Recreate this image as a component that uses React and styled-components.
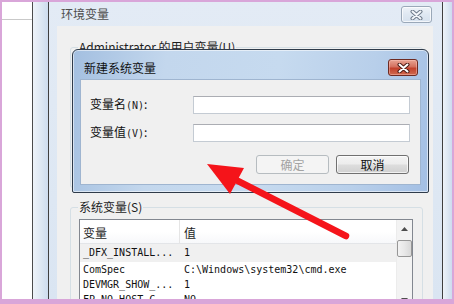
import React from 'react';
import styled, { createGlobalStyle } from 'styled-components';

const Global = createGlobalStyle`
  html, body { margin: 0; padding: 0; background: #d9a6d9; }
  body { width: 454px; height: 304px; overflow: hidden; font-family: "Noto Sans CJK SC", "Liberation Sans", sans-serif; }
  * { box-sizing: border-box; }
`;

const Screen = styled.div`
  position: relative;
  width: 454px;
  height: 304px;
  padding: 2px 2px 5px 2px;
  background: #d9a6d9;
  display: flex;
  overflow: hidden;
`;

const BackWindow = styled.div`
  width: 31px;
  background: #fff;
  border-right: 1px solid #4b4b4b;
`;

const BackWindowHeader = styled.div`
  height: 18px;
  border-bottom: 1px solid #c9c9c9;
`;

const GlassBand = styled.div`
  width: ${p => p.$w}px;
  background: linear-gradient(90deg, #eef3f9 0%, #dbe6f2 60%, #cddcee 100%);
  border-${p => p.$side}: 1px solid #3f3f3f;
`;

const Dialog = styled.div`
  flex: 1;
  display: flex;
  flex-direction: column;
  background: linear-gradient(180deg, #e3ebf5 0%, #dae5f2 100%);
  overflow: hidden;
`;

const TitleBar = styled.div`
  height: 24px;
  display: flex;
  align-items: flex-start;
  justify-content: space-between;
  padding: 4px 10px 0 12px;
  flex-shrink: 0;
`;

const DialogTitle = styled.div`
  font-size: 12px;
  line-height: 16px;
  color: #4d4d4d;
`;

const CloseButton = styled.div`
  width: ${p => p.$w}px;
  height: 17px;
  border-radius: 3px;
  display: flex;
  align-items: center;
  justify-content: center;
  border: 1px solid ${p => (p.$active ? '#6d2a22' : '#9aa8b8')};
  background: ${p =>
    p.$active
      ? 'linear-gradient(180deg, #e8a493 0%, #d4705e 45%, #c2412c 55%, #cf6a4f 100%)'
      : 'linear-gradient(180deg, #eef3f8 0%, #dfe8f2 50%, #d6e1ee 100%)'};
  box-shadow: inset 0 0 0 1px ${p => (p.$active ? 'rgba(255,200,190,0.45)' : 'rgba(255,255,255,0.7)')};
`;

const Body = styled.div`
  flex: 1;
  margin: 0 9px 0 8px;
  background: #f0f0f0;
  display: flex;
  flex-direction: column;
  overflow: hidden;
`;

const Group = styled.fieldset`
  margin: ${p => p.$mt}px 10px 0 13px;
  padding: 0 9px 0 7px;
  border: 1px solid #d5dfe5;
  border-radius: 3px;
  min-width: 0;
  height: ${p => (p.$h ? `${p.$h}px` : 'auto')};
  flex-shrink: 0;
`;

const GroupLabel = styled.legend`
  padding: 0 1px;
  font-size: 12px;
  line-height: 14px;
  color: #1e1e1e;
`;

const List = styled.div`
  margin-top: 5px;
  margin-left: 1px;
  height: 90px;
  border: 1px solid #828790;
  background: #fff;
  display: flex;
`;

const ListMain = styled.div`
  flex: 1;
  display: flex;
  flex-direction: column;
`;

const Columns = styled.div`
  display: grid;
  grid-template-columns: 100px 1fr;
`;

const HeaderRow = styled(Columns)`
  height: 24px;
  border-bottom: 1px solid #e3e5e8;
  background: linear-gradient(180deg, #ffffff 0%, #ffffff 50%, #f7f8fa 100%);
`;

const HeaderCell = styled.div`
  font-size: 12px;
  line-height: 16px;
  padding: 5px 0 0 ${p => p.$pl}px;
  color: #1e1e1e;
  border-right: ${p => (p.$divider ? '1px solid #e5e5e5' : 'none')};
`;

const Row = styled(Columns)`
  height: ${p => p.$h}px;
  align-items: center;
  background: ${p => (p.$selected ? '#f0f0f0' : 'transparent')};
`;

const Cell = styled.div`
  font-family: "DejaVu Sans Mono", "Liberation Mono", monospace;
  font-size: 10px;
  line-height: 14px;
  color: #111;
  padding-left: ${p => p.$pl}px;
  white-space: pre;
`;

const ScrollBar = styled.div`
  width: 16px;
  background: #f3f3f3;
  border-left: 1px solid #ececec;
  display: flex;
  flex-direction: column;
  align-items: center;
`;

const ScrollArrow = styled.div`
  height: 17px;
  width: 100%;
  display: flex;
  align-items: center;
  justify-content: center;
`;

const ScrollThumb = styled.div`
  width: 15px;
  height: 17px;
  margin-top: 3px;
  border: 1px solid #979797;
  border-radius: 2px;
  background: linear-gradient(90deg, #f3f3f3 0%, #e8e8e8 50%, #d9d9d9 100%);
`;

const ScrollTrack = styled.div`
  flex: 1;
`;

const Modal = styled.div`
  position: absolute;
  left: 72px;
  top: 49px;
  width: 357px;
  height: 144px;
  border: 1px solid #2f3b4a;
  border-radius: 6px 6px 2px 2px;
  background: linear-gradient(100deg, #a3bfe0 0%, #c3d7ed 25%, #c6daef 55%, #b8cfea 80%, #a3bfe4 100%);
  box-shadow: inset 0 0 0 1px rgba(255, 255, 255, 0.55);
  display: flex;
  flex-direction: column;
`;

const ModalTitleBar = styled.div`
  height: 29px;
  flex-shrink: 0;
  display: flex;
  align-items: flex-start;
  justify-content: space-between;
  padding: 9px 10px 0 11px;
`;

const ModalTitle = styled.div`
  font-size: 12px;
  line-height: 16px;
  color: #111;
  margin-top: 1px;
`;

const ModalBody = styled.div`
  flex: 1;
  margin: 0 7px 7px 7px;
  background: #f0f0f0;
  border: 1px solid #9fb5d0;
  padding: 16px 10px 0 9px;
`;

const Form = styled.div`
  display: grid;
  grid-template-columns: 103px 217px;
  row-gap: 10px;
  align-items: center;
`;

const Label = styled.div`
  font-size: 12px;
  line-height: 16px;
  color: #111;
`;

const Key = styled.span`
  font-size: 10px;
  font-family: "DejaVu Sans Mono", monospace;
  color: #222;
`;

const Input = styled.div`
  height: 18px;
  background: #fff;
  border: 1px solid #c4cbd3;
  border-top-color: #abadb3;
`;

const ButtonRow = styled.div`
  display: flex;
  justify-content: flex-end;
  gap: 7px;
  margin-top: 13px;
  margin-right: 1px;
`;

const Button = styled.div`
  width: 73px;
  height: 19px;
  border-radius: 3px;
  display: flex;
  align-items: center;
  justify-content: center;
  font-size: 12px;
  line-height: 16px;
  border: 1px solid ${p => (p.$disabled ? '#b6bcc0' : '#707070')};
  color: ${p => (p.$disabled ? '#a3a3a3' : '#111')};
  background: ${p =>
    p.$disabled
      ? '#f4f4f4'
      : 'linear-gradient(180deg, #f4f4f4 0%, #ececec 48%, #dddddd 52%, #d0d0d0 100%)'};
  box-shadow: inset 0 0 0 1px ${p => (p.$disabled ? 'transparent' : 'rgba(255,255,255,0.7)')};
`;

const Overlay = styled.svg`
  position: absolute;
  left: 0;
  top: 0;
  pointer-events: none;
`;

const CloseGlyph = ({ light }) => (
  <svg width="13" height="10" viewBox="0 0 13 10">
    <path d="M2.5 1.5 L10.5 8.5 M10.5 1.5 L2.5 8.5" stroke={light ? '#6d7a8a' : '#4a1a14'} strokeWidth="4" strokeLinecap="round" fill="none" />
    <path d="M2.5 1.5 L10.5 8.5 M10.5 1.5 L2.5 8.5" stroke={light ? '#f4f7fb' : '#ffffff'} strokeWidth="2" strokeLinecap="round" fill="none" />
  </svg>
);

const Tri = ({ up }) => (
  <svg width="7" height="4" viewBox="0 0 7 4">
    <path d={up ? 'M0 4 L3.5 0 L7 4 Z' : 'M0 0 L3.5 4 L7 0 Z'} fill="#4d4d4d" />
  </svg>
);

const rows = [
  ['_DFX_INSTALL...', '1', true],
  ['ComSpec', 'C:\\Windows\\system32\\cmd.exe', false],
  ['DEVMGR_SHOW_...', '1', false],
  ['FP_NO_HOST_C...', 'NO', false],
];

export default function App() {
  return (
    <>
      <Global />
      <Screen>
        <BackWindow>
          <BackWindowHeader />
        </BackWindow>
        <GlassBand $w={16} $side="right" />
        <Dialog>
          <TitleBar>
            <DialogTitle>环境变量</DialogTitle>
            <CloseButton $w={31}>
              <CloseGlyph light />
            </CloseButton>
          </TitleBar>
          <Body>
            <Group $mt={14} $h={148}>
              <GroupLabel>Administrator 的用户变量(U)</GroupLabel>
            </Group>
            <Group $mt={12}>
              <GroupLabel>系统变量(S)</GroupLabel>
              <List>
                <ListMain>
                  <HeaderRow>
                    <HeaderCell $pl={3} $divider>变量</HeaderCell>
                    <HeaderCell $pl={4}>值</HeaderCell>
                  </HeaderRow>
                  {rows.map(([k, v, sel], i) => (
                    <Row key={k} $selected={sel} $h={i === 0 ? 18 : 15}>
                      <Cell $pl={3}>{k}</Cell>
                      <Cell $pl={4}>{v}</Cell>
                    </Row>
                  ))}
                </ListMain>
                <ScrollBar>
                  <ScrollArrow><Tri up /></ScrollArrow>
                  <ScrollThumb />
                  <ScrollTrack />
                  <ScrollArrow><Tri /></ScrollArrow>
                </ScrollBar>
              </List>
            </Group>
          </Body>
        </Dialog>
        <GlassBand $w={10} $side="left" />

        <Modal>
          <ModalTitleBar>
            <ModalTitle>新建系统变量</ModalTitle>
            <CloseButton $w={30} $active>
              <CloseGlyph />
            </CloseButton>
          </ModalTitleBar>
          <ModalBody>
            <Form>
              <Label>变量名<Key>(N)</Key>:</Label>
              <Input />
              <Label>变量值<Key>(V)</Key>:</Label>
              <Input />
            </Form>
            <ButtonRow>
              <Button $disabled>确定</Button>
              <Button>取消</Button>
            </ButtonRow>
          </ModalBody>
        </Modal>

        <Overlay width="454" height="304" viewBox="0 0 454 304">
          <line x1="236" y1="180" x2="346" y2="236" stroke="#f5141a" strokeWidth="6.5" strokeLinecap="round" />
          <polygon points="207,164 244,168 230,194" fill="#f5141a" />
        </Overlay>
      </Screen>
    </>
  );
}
